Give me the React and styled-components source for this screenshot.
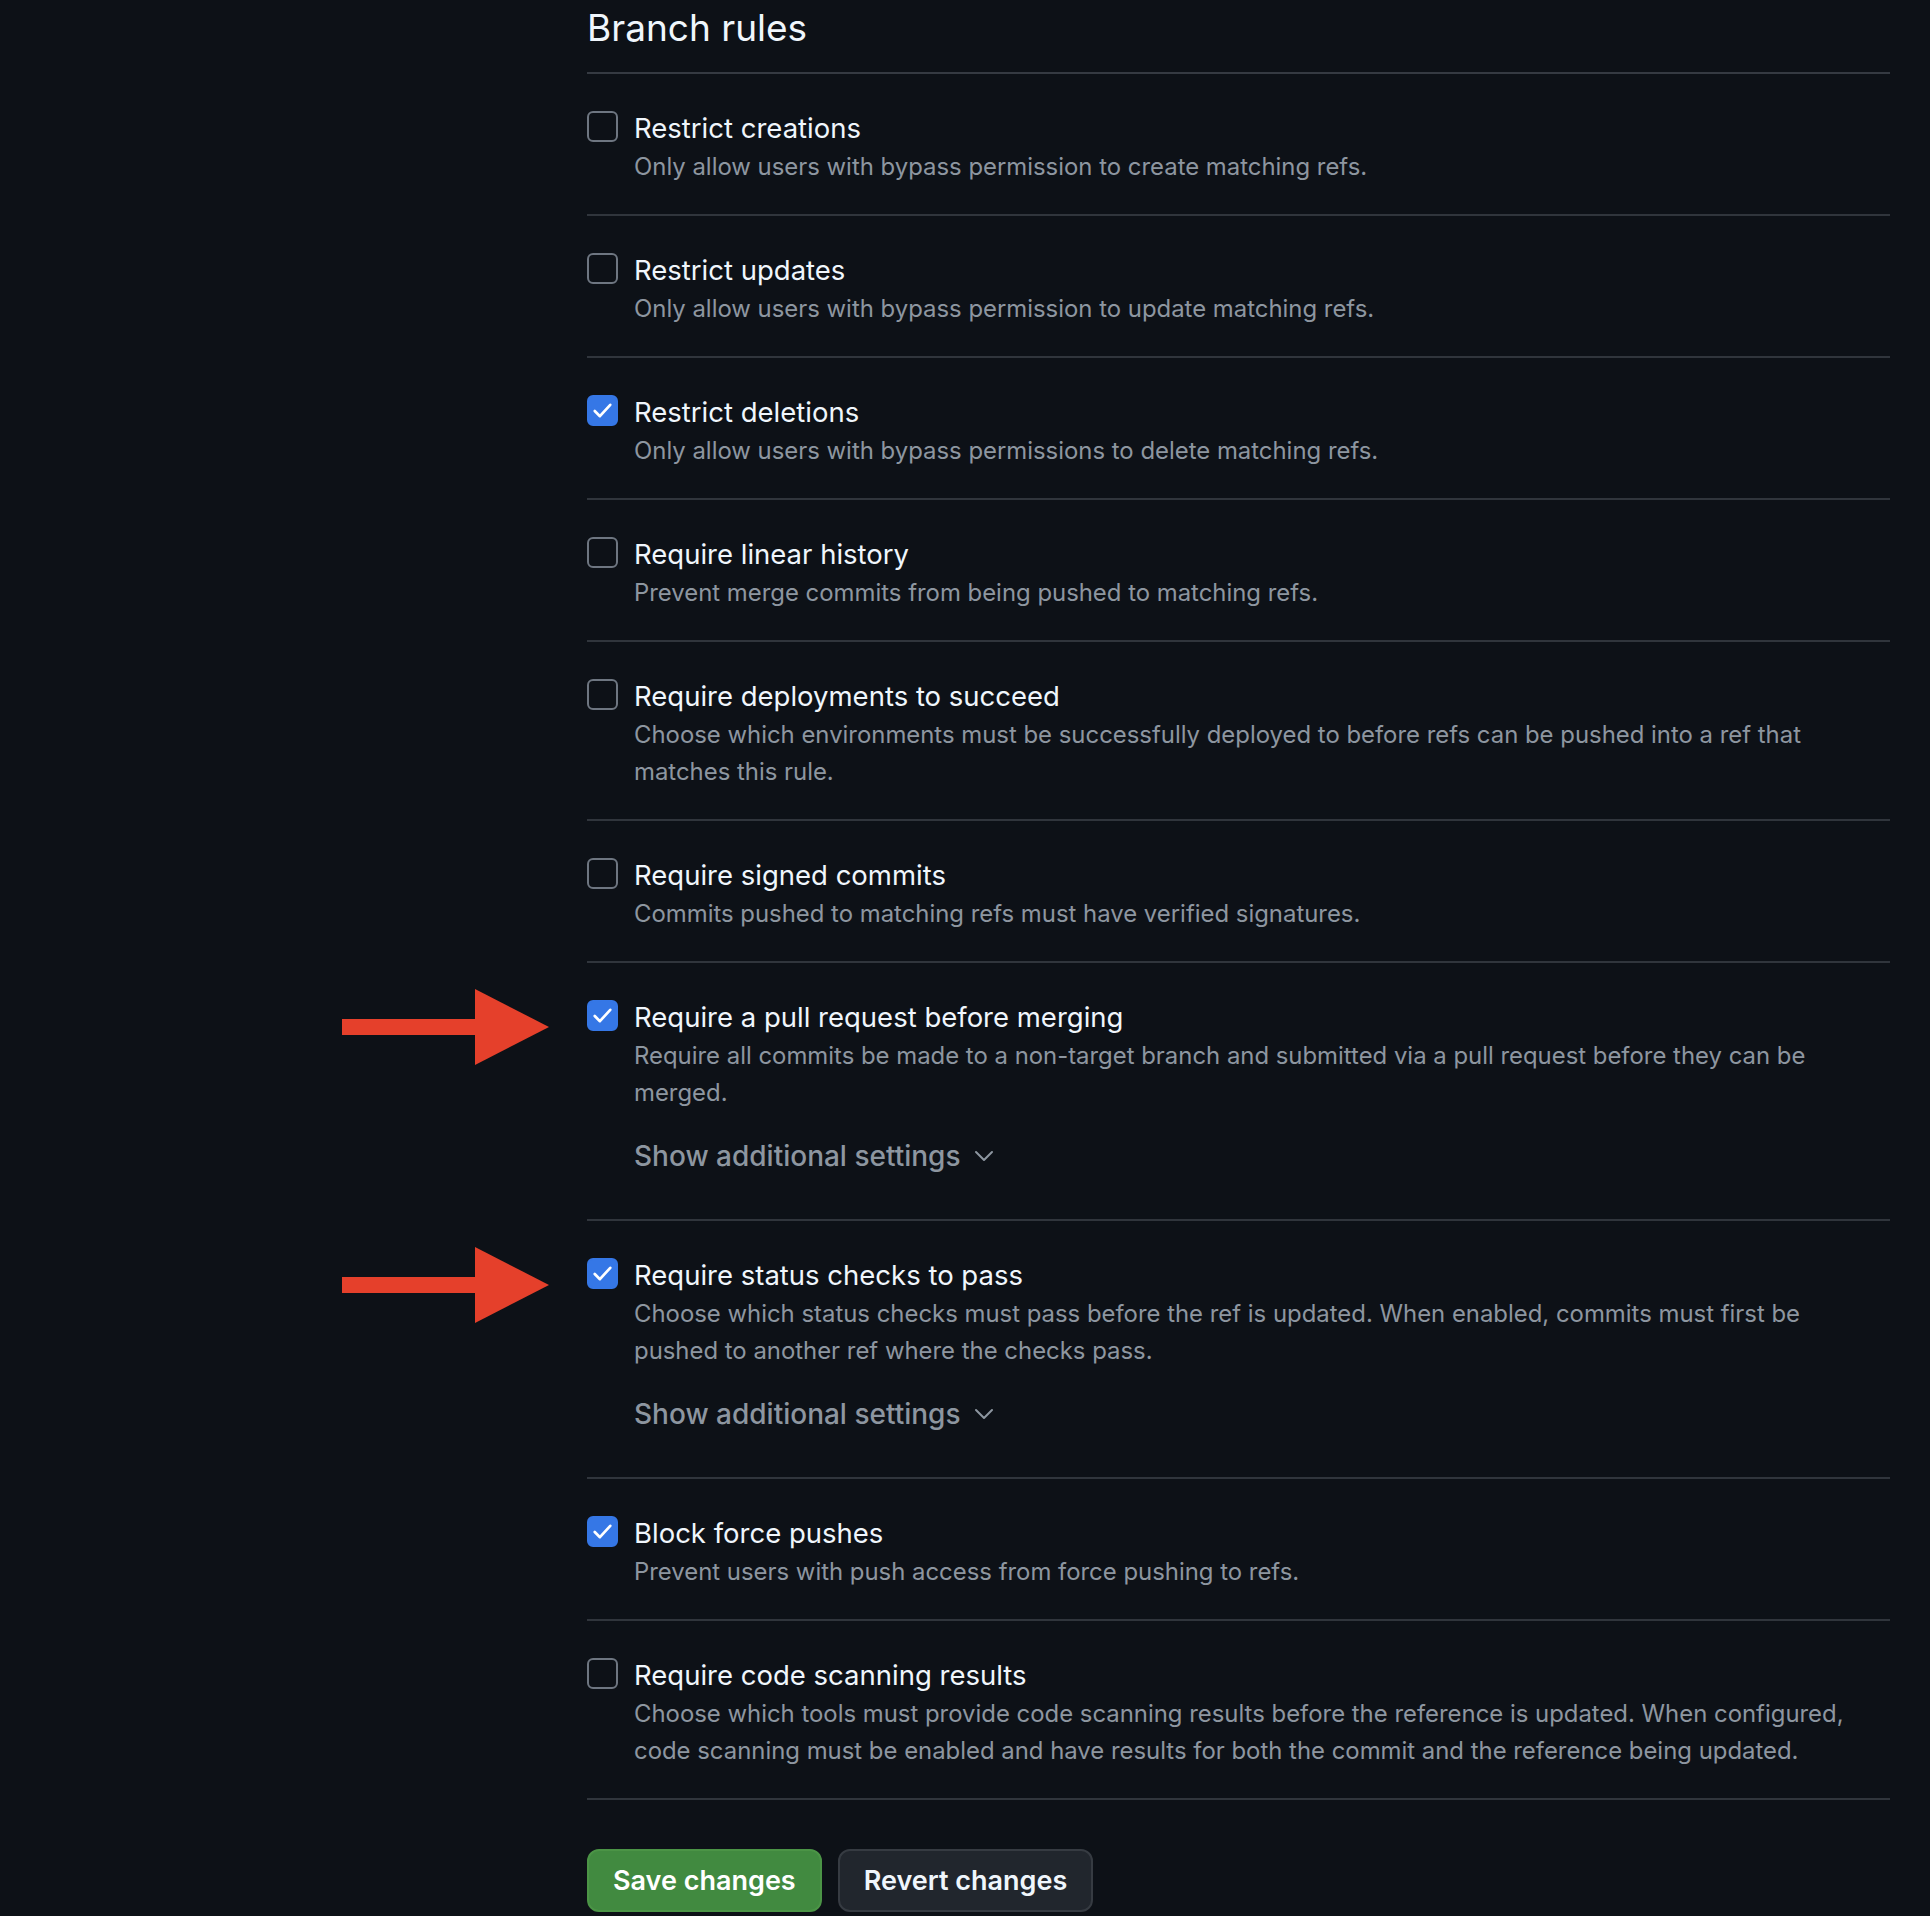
import React from "react";
import styled, { createGlobalStyle } from "styled-components";

const GlobalStyle = createGlobalStyle`
  body {
    margin: 0;
    background: #0d1117;
    font-family: Inter, "Noto Sans", "Liberation Sans", sans-serif;
    color: #e6edf3;
  }
`;

const rules = [
  { title: "Restrict creations", desc: "Only allow users with bypass permission to create matching refs." },
  { title: "Restrict updates", desc: "Only allow users with bypass permission to update matching refs." },
  { title: "Restrict deletions", desc: "Only allow users with bypass permissions to delete matching refs.", checked: true },
  { title: "Require linear history", desc: "Prevent merge commits from being pushed to matching refs." },
  {
    title: "Require deployments to succeed",
    desc: "Choose which environments must be successfully deployed to before refs can be pushed into a ref that matches this rule.",
  },
  { title: "Require signed commits", desc: "Commits pushed to matching refs must have verified signatures." },
  {
    title: "Require a pull request before merging",
    desc: "Require all commits be made to a non-target branch and submitted via a pull request before they can be merged.",
    checked: true,
    more: true,
    arrow: true,
  },
  {
    title: "Require status checks to pass",
    desc: "Choose which status checks must pass before the ref is updated. When enabled, commits must first be pushed to another ref where the checks pass.",
    checked: true,
    more: true,
    arrow: true,
  },
  { title: "Block force pushes", desc: "Prevent users with push access from force pushing to refs.", checked: true },
  {
    title: "Require code scanning results",
    desc: "Choose which tools must provide code scanning results before the reference is updated. When configured, code scanning must be enabled and have results for both the commit and the reference being updated.",
  },
];

export default function App() {
  return (
    <>
      <GlobalStyle />
      <Page>
        <Title>Branch rules</Title>
        {rules.map((r) => (
          <Rule key={r.title}>
            {r.arrow && (
              <Arrow width="207" height="76" viewBox="0 0 207 76">
                <rect x="0" y="30" width="136" height="16" fill="#e5402b" />
                <polygon points="133,0 207,38 133,76" fill="#e5402b" />
              </Arrow>
            )}
            <Box $checked={r.checked}>
              {r.checked && (
                <svg width="31" height="31" viewBox="0 0 30 30">
                  <polyline
                    points="7.5,15.5 12.5,20.5 22.5,9.5"
                    fill="none"
                    stroke="#fff"
                    strokeWidth="2.6"
                    strokeLinecap="round"
                    strokeLinejoin="round"
                  />
                </svg>
              )}
            </Box>
            <Body>
              <Label>{r.title}</Label>
              <Desc>{r.desc}</Desc>
              {r.more && (
                <More>
                  Show additional settings
                  <svg width="20" height="12" viewBox="0 0 20 12">
                    <polyline
                      points="2,2 10,10 18,2"
                      fill="none"
                      stroke="#8d96a0"
                      strokeWidth="2"
                      strokeLinecap="round"
                      strokeLinejoin="round"
                    />
                  </svg>
                </More>
              )}
            </Body>
          </Rule>
        ))}
        <Actions>
          <Button $primary>Save changes</Button>
          <Button>Revert changes</Button>
        </Actions>
      </Page>
    </>
  );
}

const Page = styled.div`
  padding: 0 40px 0 587px;
`;

const Title = styled.h2`
  margin: 4px 0 0;
  padding-bottom: 20px;
  font-size: 37px;
  line-height: 48px;
  font-weight: 400;
  color: #f0f6fc;
  border-bottom: 2px solid #353a42;
`;

const Rule = styled.div`
  position: relative;
  display: grid;
  grid-template-columns: 31px 1fr;
  column-gap: 16px;
  padding: 34px 0 29px;
  border-bottom: 2px solid #30353c;
`;

const Arrow = styled.svg`
  position: absolute;
  left: -245px;
  top: 26px;
`;

const Box = styled.div`
  box-sizing: border-box;
  width: 31px;
  height: 31px;
  margin-top: 3px;
  border-radius: 6px;
  border: 2px solid ${(p) => (p.$checked ? "#3577e6" : "#6e7681")};
  background: ${(p) => (p.$checked ? "#3577e6" : "transparent")};
  display: flex;
  align-items: center;
  justify-content: center;

  svg {
    flex: none;
  }
`;

const Body = styled.div`
  min-width: 0;
`;

const Label = styled.div`
  font-size: 27.5px;
  line-height: 40px;
  font-weight: 400;
  color: #f0f6fc;
`;

const Desc = styled.div`
  font-size: 23.9px;
  line-height: 37px;
  color: #8d96a0;
`;

const More = styled.button`
  display: flex;
  align-items: center;
  gap: 13px;
  margin: 25px 0 14px;
  padding: 0;
  border: 0;
  background: none;
  font-family: inherit;
  font-size: 28px;
  line-height: 40px;
  font-weight: 500;
  color: #8d96a0;
`;

const Actions = styled.div`
  display: flex;
  gap: 16px;
  margin-top: 49px;
`;

const Button = styled.button`
  box-sizing: border-box;
  height: 63px;
  padding: 0 24px;
  border-radius: 12px;
  font-family: inherit;
  font-size: 27px;
  font-weight: 600;
  border: 2px solid ${(p) => (p.$primary ? "#4b9446" : "#363b42")};
  background: ${(p) => (p.$primary ? "#418a40" : "#21262d")};
  color: ${(p) => (p.$primary ? "#ffffff" : "#f0f6fc")};
`;
